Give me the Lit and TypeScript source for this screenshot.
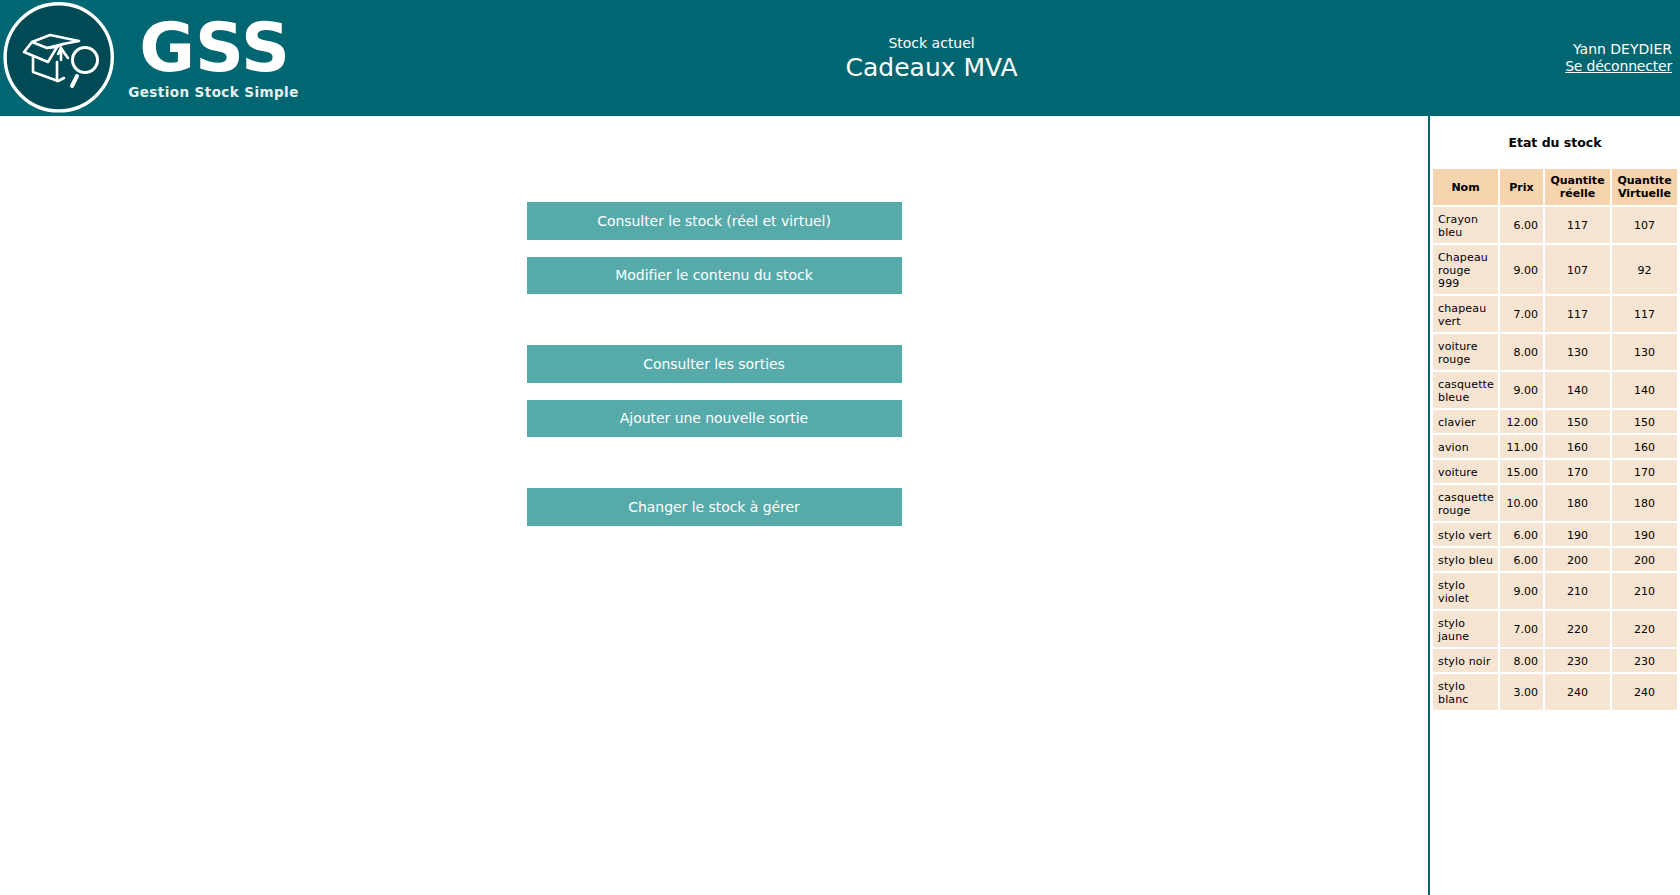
import { LitElement, css, html } from 'lit';
import { customElement } from 'lit/decorators.js';

const STOCK = [
  ['Crayon bleu', '6.00', '117', '107'],
  ['Chapeau rouge 999', '9.00', '107', '92'],
  ['chapeau vert', '7.00', '117', '117'],
  ['voiture rouge', '8.00', '130', '130'],
  ['casquette bleue', '9.00', '140', '140'],
  ['clavier', '12.00', '150', '150'],
  ['avion', '11.00', '160', '160'],
  ['voiture', '15.00', '170', '170'],
  ['casquette rouge', '10.00', '180', '180'],
  ['stylo vert', '6.00', '190', '190'],
  ['stylo bleu', '6.00', '200', '200'],
  ['stylo violet', '9.00', '210', '210'],
  ['stylo jaune', '7.00', '220', '220'],
  ['stylo noir', '8.00', '230', '230'],
  ['stylo blanc', '3.00', '240', '240'],
];

const MENU = [
  ['Consulter le stock (réel et virtuel)', 'Modifier le contenu du stock'],
  ['Consulter les sorties', 'Ajouter une nouvelle sortie'],
  ['Changer le stock à gérer'],
];

@customElement('app-root')
export class AppRoot extends LitElement {
  static get styles() {
    return css`
      :host {
        display: flex;
        flex-direction: column;
        height: 100vh;
        overflow: hidden;
        font-family: 'DejaVu Sans', Verdana, sans-serif;
        color: #000;
        background: #fff;
      }
      header {
        display: flex;
        align-items: center;
        height: 116px;
        flex: none;
        background: #006672;
        color: #fff;
      }
      .logo {
        display: flex;
        flex: none;
        width: 300px;
        height: 116px;
      }
      .logo svg {
        flex: none;
        width: 120px;
        height: 116px;
      }
      .brand {
        display: flex;
        flex-direction: column;
        align-items: center;
        width: 171px;
        margin-left: 8px;
        padding-top: 14px;
        font-weight: bold;
      }
      .brand b {
        font-size: 68px;
        line-height: 68px;
        padding-left: 2px;
      }
      .brand span {
        margin-top: 2px;
        font-size: 13.5px;
        line-height: 16px;
        letter-spacing: 0.43px;
        white-space: nowrap;
        color: #e8f0f0;
      }
      .current {
        flex: 1;
        padding: 2px 2px 0 0;
        text-align: center;
      }
      .current div {
        font-size: 14px;
        line-height: 17px;
      }
      .current strong {
        display: block;
        font-size: 25px;
        font-weight: normal;
        line-height: 32px;
      }
      .user {
        flex: none;
        padding: 0 8px 0 0;
        font-size: 14px;
        line-height: 17px;
        text-align: right;
      }
      .user a {
        color: #fff;
        letter-spacing: -0.2px;
        text-decoration: underline;
      }
      .body {
        display: flex;
        flex: 1;
        min-height: 0;
      }
      main {
        display: flex;
        flex: 1;
        flex-direction: column;
        align-items: center;
        gap: 51px;
        padding-top: 86px;
      }
      .group {
        display: flex;
        flex-direction: column;
        gap: 17px;
      }
      .btn {
        width: 375px;
        height: 37.5px;
        border: none;
        padding: 0;
        background: #56aaaa;
        color: #fff;
        font: 14px 'DejaVu Sans', Verdana, sans-serif;
        letter-spacing: -0.05px;
      }
      aside {
        flex: none;
        width: 250px;
        border-left: 2px solid #006672;
      }
      h2 {
        margin: 0;
        padding-top: 18px;
        height: 33px;
        font-size: 12.5px;
        line-height: 17px;
        font-weight: bold;
        text-align: center;
      }
      table {
        table-layout: fixed;
        width: 248px;
        margin-left: 1px;
        border-collapse: separate;
        border-spacing: 2px;
        font-size: 11px;
        line-height: 13px;
      }
      .c-name { width: 65px; }
      .c-price { width: 43px; }
      .c-qty { width: 65px; }
      th {
        background: #f5d3ac;
        padding: 5px 0;
        font-weight: bold;
        text-align: center;
      }
      td {
        background: #f5e4d2;
        padding: 5.5px 5px 4.5px;
        text-align: center;
      }
      td.name {
        text-align: left;
        padding: 6px 3px 4px 5px;
        letter-spacing: 0.15px;
      }
      td.price {
        text-align: right;
      }
    `;
  }

  private renderLogo() {
    return html`
      <svg viewBox="0 0 120 116" aria-hidden="true">
        <circle cx="58.7" cy="57.3" r="53.6" fill="#004a55" stroke="#fff" stroke-width="3.4" />
        <g fill="none" stroke="#fff" stroke-width="2.6" stroke-linejoin="round" stroke-linecap="round">
          <path d="M33 57V72L58 81L64 78" />
          <path d="M57 62V81" />
          <path d="M24 52L32 42L50 35L79 41L63 44L57 47L48 62Z" />
          <path d="M32 42L47 48L57 47" />
          <path d="M47 48L63 44" />
          <path d="M61 51V60M58 54L61 48L65 54" />
          <path d="M65 54L68 58" />
        </g>
        <circle cx="85" cy="60" r="12.5" fill="none" stroke="#fff" stroke-width="3" />
        <path d="M77 76L72 86" fill="none" stroke="#fff" stroke-width="4" stroke-linecap="round" />
      </svg>
    `;
  }

  render() {
    return html`
      <header>
        <div class="logo">
          ${this.renderLogo()}
          <div class="brand">
            <b>GSS</b>
            <span>Gestion Stock Simple</span>
          </div>
        </div>
        <div class="current">
          <div>Stock actuel</div>
          <strong>Cadeaux MVA</strong>
        </div>
        <div class="user">
          <div>Yann DEYDIER</div>
          <a href="#">Se déconnecter</a>
        </div>
      </header>
      <div class="body">
        <main>
          ${MENU.map(
            (group) => html`
              <div class="group">
                ${group.map((label) => html`<button class="btn">${label}</button>`)}
              </div>
            `
          )}
        </main>
        <aside>
          <h2>Etat du stock</h2>
          <table>
            <colgroup>
              <col class="c-name" />
              <col class="c-price" />
              <col class="c-qty" />
              <col class="c-qty" />
            </colgroup>
            <thead>
              <tr>
                <th>Nom</th>
                <th>Prix</th>
                <th>Quantite réelle</th>
                <th>Quantite Virtuelle</th>
              </tr>
            </thead>
            <tbody>
              ${STOCK.map(
                ([name, price, real, virtual]) => html`
                  <tr>
                    <td class="name">${name}</td>
                    <td class="price">${price}</td>
                    <td>${real}</td>
                    <td>${virtual}</td>
                  </tr>
                `
              )}
            </tbody>
          </table>
        </aside>
      </div>
    `;
  }
}
